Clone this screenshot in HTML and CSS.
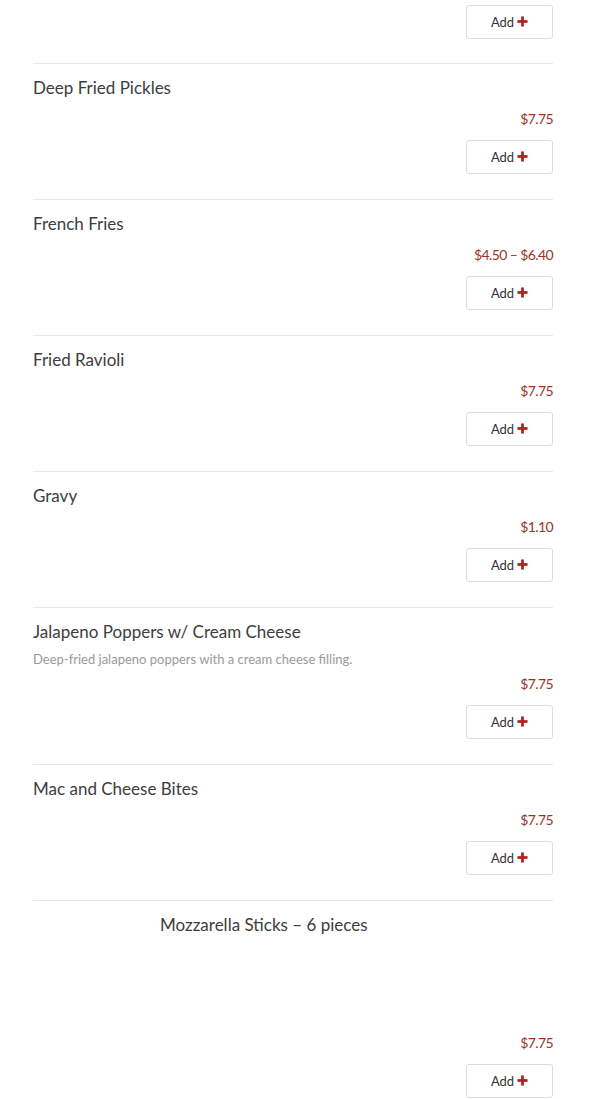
FILE: index.html
```html
<!DOCTYPE html>
<html>
<head>
<meta charset="utf-8">
<link rel="stylesheet" href="styles.css">
</head>
<body>
<div class="menu">
  <div class="item first">
    <div class="actions"><button class="add">Add <svg class="plus" viewBox="0 0 12 12"><rect x="4.5" y="0.5" width="3" height="11"/><rect x="0.5" y="4.5" width="11" height="3"/></svg></button></div>
  </div>
  <div class="item">
    <div class="title">Deep Fried Pickles</div>
    <div class="price">$7.75</div>
    <div class="actions"><button class="add">Add <svg class="plus" viewBox="0 0 12 12"><rect x="4.5" y="0.5" width="3" height="11"/><rect x="0.5" y="4.5" width="11" height="3"/></svg></button></div>
  </div>
  <div class="item">
    <div class="title">French Fries</div>
    <div class="price">$4.50 – $6.40</div>
    <div class="actions"><button class="add">Add <svg class="plus" viewBox="0 0 12 12"><rect x="4.5" y="0.5" width="3" height="11"/><rect x="0.5" y="4.5" width="11" height="3"/></svg></button></div>
  </div>
  <div class="item">
    <div class="title">Fried Ravioli</div>
    <div class="price">$7.75</div>
    <div class="actions"><button class="add">Add <svg class="plus" viewBox="0 0 12 12"><rect x="4.5" y="0.5" width="3" height="11"/><rect x="0.5" y="4.5" width="11" height="3"/></svg></button></div>
  </div>
  <div class="item">
    <div class="title">Gravy</div>
    <div class="price">$1.10</div>
    <div class="actions"><button class="add">Add <svg class="plus" viewBox="0 0 12 12"><rect x="4.5" y="0.5" width="3" height="11"/><rect x="0.5" y="4.5" width="11" height="3"/></svg></button></div>
  </div>
  <div class="item">
    <div class="title">Jalapeno Poppers w/ Cream Cheese</div>
    <div class="desc">Deep-fried jalapeno poppers with a cream cheese filling.</div>
    <div class="price">$7.75</div>
    <div class="actions"><button class="add">Add <svg class="plus" viewBox="0 0 12 12"><rect x="4.5" y="0.5" width="3" height="11"/><rect x="0.5" y="4.5" width="11" height="3"/></svg></button></div>
  </div>
  <div class="item">
    <div class="title">Mac and Cheese Bites</div>
    <div class="price">$7.75</div>
    <div class="actions"><button class="add">Add <svg class="plus" viewBox="0 0 12 12"><rect x="4.5" y="0.5" width="3" height="11"/><rect x="0.5" y="4.5" width="11" height="3"/></svg></button></div>
  </div>
  <div class="item">
    <div class="row">
      <div class="thumb"></div>
      <div class="title">Mozzarella Sticks – 6 pieces</div>
    </div>
    <div class="price">$7.75</div>
    <div class="actions"><button class="add">Add <svg class="plus" viewBox="0 0 12 12"><rect x="4.5" y="0.5" width="3" height="11"/><rect x="0.5" y="4.5" width="11" height="3"/></svg></button></div>
  </div>
</div>
</body>
</html>
```
FILE: styles.css
```css
html, body {
  margin: 0;
  padding: 0;
  background: #ffffff;
}
body {
  font-family: "Lato", "Open Sans", sans-serif;
  color: #3d3d3d;
}
.menu {
  padding: 0 37px 0 33px;
}
.item {
  border-top: 1px solid #e8e8e8;
  padding: 12px 0 25px;
  display: flex;
  flex-direction: column;
}
.item.first {
  border-top: none;
  padding: 5px 0 24px;
}
.item.first .actions {
  margin-top: 0;
}
.title {
  font-size: 17px;
  line-height: 24px;
  color: #3d3d3d;
}
.desc {
  font-size: 13px;
  line-height: 18px;
  color: #9a9a9a;
  margin: 6px 0 -3px;
}
.price {
  font-size: 14px;
  line-height: 20px;
  color: #9b3428;
  text-align: right;
  margin-top: 9px;
  letter-spacing: -0.6px;
}
.actions {
  display: flex;
  justify-content: flex-end;
  margin-top: 11px;
}
.add {
  width: 87px;
  height: 34px;
  box-sizing: border-box;
  border: 1px solid #dcdcdc;
  border-radius: 3px;
  background: #ffffff;
  font-family: "Lato", "Open Sans", sans-serif;
  font-size: 13px;
  color: #333333;
  display: flex;
  align-items: center;
  justify-content: center;
  gap: 3px;
  padding: 0;
}
.plus {
  width: 11px;
  height: 11px;
  fill: #b3221c;
  margin-top: -2px;
}
.row {
  display: flex;
  align-items: flex-start;
}
.thumb {
  width: 117px;
  height: 111px;
  margin-right: 10px;
  flex: none;
}
```
